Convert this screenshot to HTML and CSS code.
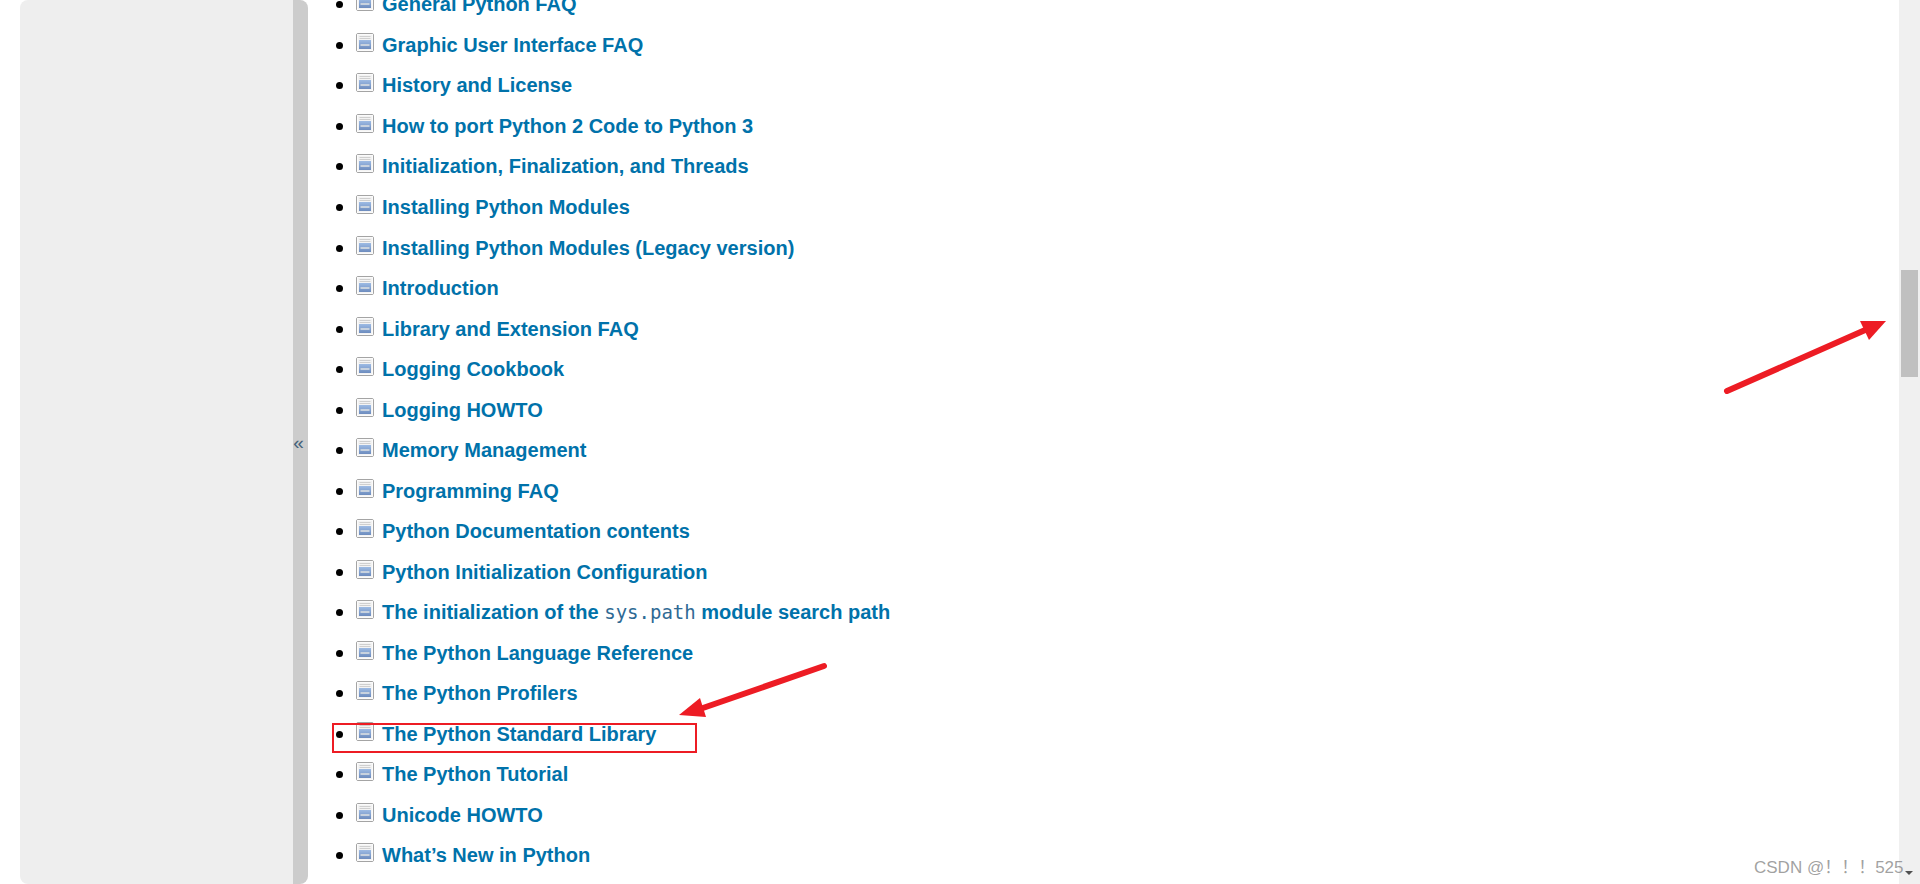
FILE: index.html
```html
<!DOCTYPE html>
<html lang="en">
<head>
<meta charset="utf-8">
<title>Python documentation</title>
<link rel="stylesheet" href="styles.css">
</head>
<body>
<svg width="0" height="0" class="defs">
  <defs>
    <linearGradient id="pic" x1="0" y1="0" x2="0" y2="1">
      <stop offset="0" stop-color="#9dbbe4"/>
      <stop offset="1" stop-color="#6d8cbe"/>
    </linearGradient>
  </defs>
  <symbol id="doc" viewBox="0 0 18 19">
    <rect x="0.5" y="0.5" width="17" height="18" rx="1.5" fill="#f3f3f3" stroke="#a4a4a4"/>
    <rect x="1.5" y="1.5" width="15" height="16" fill="none" stroke="#fbfbfb"/>
    <path d="M3.5 3.5h11M3.5 5.5h11" stroke="#cfcfcf" stroke-width="1"/>
    <rect x="3" y="7" width="12" height="9" fill="url(#pic)"/>
    <rect x="4.5" y="11" width="9" height="2" fill="#c8d2de"/>
  </symbol>
</svg>
<div class="page">
  <aside class="sidebar">
    <div class="sidebar-body"></div>
    <div class="collapse">«</div>
  </aside>
  <main class="content">
    <ul class="toc">
      <li><svg class="doc"><use href="#doc"/></svg><a href="#">General Python FAQ</a></li>
      <li><svg class="doc"><use href="#doc"/></svg><a href="#">Graphic User Interface FAQ</a></li>
      <li><svg class="doc"><use href="#doc"/></svg><a href="#">History and License</a></li>
      <li><svg class="doc"><use href="#doc"/></svg><a href="#">How to port Python 2 Code to Python 3</a></li>
      <li><svg class="doc"><use href="#doc"/></svg><a href="#">Initialization, Finalization, and Threads</a></li>
      <li><svg class="doc"><use href="#doc"/></svg><a href="#">Installing Python Modules</a></li>
      <li><svg class="doc"><use href="#doc"/></svg><a href="#">Installing Python Modules (Legacy version)</a></li>
      <li><svg class="doc"><use href="#doc"/></svg><a href="#">Introduction</a></li>
      <li><svg class="doc"><use href="#doc"/></svg><a href="#">Library and Extension FAQ</a></li>
      <li><svg class="doc"><use href="#doc"/></svg><a href="#">Logging Cookbook</a></li>
      <li><svg class="doc"><use href="#doc"/></svg><a href="#">Logging HOWTO</a></li>
      <li><svg class="doc"><use href="#doc"/></svg><a href="#">Memory Management</a></li>
      <li><svg class="doc"><use href="#doc"/></svg><a href="#">Programming FAQ</a></li>
      <li><svg class="doc"><use href="#doc"/></svg><a href="#">Python Documentation contents</a></li>
      <li><svg class="doc"><use href="#doc"/></svg><a href="#">Python Initialization Configuration</a></li>
      <li><svg class="doc"><use href="#doc"/></svg><a href="#">The initialization of the <code>sys.path</code> module search path</a></li>
      <li><svg class="doc"><use href="#doc"/></svg><a href="#">The Python Language Reference</a></li>
      <li><svg class="doc"><use href="#doc"/></svg><a href="#">The Python Profilers</a></li>
      <li><svg class="doc"><use href="#doc"/></svg><a href="#">The Python Standard Library</a></li>
      <li><svg class="doc"><use href="#doc"/></svg><a href="#">The Python Tutorial</a></li>
      <li><svg class="doc"><use href="#doc"/></svg><a href="#">Unicode HOWTO</a></li>
      <li><svg class="doc"><use href="#doc"/></svg><a href="#">What’s New in Python</a></li>
    </ul>
  </main>
  <div class="scrollbar">
    <div class="thumb"></div>
    <div class="scroll-down"></div>
  </div>
</div>
<svg class="annotations" viewBox="0 0 1920 884" width="1920" height="884">
  <rect x="333" y="724" width="363" height="28" fill="none" stroke="#ed1c24" stroke-width="2"/>
  <path d="M1727 391L1872 327" stroke="#ed1c24" stroke-width="6" stroke-linecap="round" fill="none"/>
  <path d="M1860 321H1886L1869 340Z" fill="#ed1c24"/>
  <path d="M824 666L700 709" stroke="#ed1c24" stroke-width="6" stroke-linecap="round" fill="none"/>
  <path d="M700 698L679 715L706 717Z" fill="#ed1c24"/>
</svg>
<div class="watermark">CSDN @！！！525</div>
</body>
</html>
```
FILE: styles.css
```css
html, body {
  margin: 0;
  height: 100%;
  overflow: hidden;
  background: #fff;
}
.defs {
  position: absolute;
}
.page {
  display: flex;
  height: 884px;
  padding-left: 20px;
  box-sizing: border-box;
  font-family: "Liberation Sans", Arial, sans-serif;
}
.sidebar {
  display: flex;
  flex: 0 0 288px;
  height: 884px;
  border-radius: 8px;
  overflow: hidden;
}
.sidebar-body {
  flex: 1;
  background: #eee;
}
.collapse {
  flex: 0 0 15px;
  background: #ccc;
  display: flex;
  align-items: center;
  justify-content: center;
  padding: 2px 4px 0 0;
  box-sizing: border-box;
  color: #44617a;
  font-size: 19px;
}
.content {
  flex: 1;
  overflow: hidden;
  min-width: 0;
}
.toc {
  margin: -15.6px 0 0;
  padding: 0 0 0 48px;
  font-size: 20px;
  line-height: 40.53px;
  font-weight: 700;
}
.toc li {
  height: 40.53px;
}
.toc li::marker {
  font-size: 22px;
}
.toc a {
  color: #0072aa;
  text-decoration: none;
}
.doc {
  width: 18px;
  height: 19px;
  margin: 0 8px 0 0;
  vertical-align: 0;
}
code {
  font-family: "DejaVu Sans Mono", monospace;
  font-size: 19px;
  font-weight: 400;
  color: #2f6a94;
}
.scrollbar {
  flex: 0 0 21px;
  background: #f0f0f0;
  position: relative;
}
.thumb {
  position: absolute;
  left: 2px;
  right: 2px;
  top: 270px;
  height: 107px;
  background: #c0c0c0;
}
.scroll-down {
  position: absolute;
  left: 6px;
  bottom: 9px;
  border: 4.5px solid transparent;
  border-top: 4.5px solid #505050;
  border-bottom: 0;
}
.annotations {
  position: absolute;
  left: 0;
  top: 0;
  pointer-events: none;
}
.watermark {
  position: absolute;
  left: 1754px;
  top: 858px;
  font-family: "Liberation Sans", "Noto Sans CJK SC", sans-serif;
  font-size: 17px;
  line-height: 20px;
  color: rgba(130, 130, 130, 0.75);
  white-space: nowrap;
}
```
